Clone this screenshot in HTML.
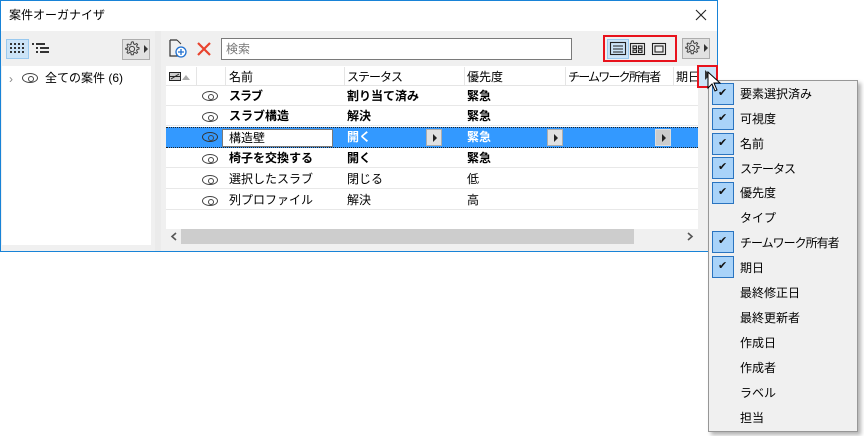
<!DOCTYPE html>
<html><head><meta charset="utf-8"><style>
*{margin:0;padding:0;box-sizing:border-box}
body{width:864px;height:436px;background:#fff;position:relative;overflow:hidden;font-family:"Liberation Sans","Noto Sans CJK JP",sans-serif;font-size:12px;color:#000}
.a{position:absolute}
.t{position:absolute;white-space:nowrap;line-height:14px}
.b{font-weight:bold}
.row{position:absolute;left:166px;width:532px;height:20px;border-bottom:1px solid #e8e8e8}
.eye{position:absolute;width:16px;height:10px;border:1.3px solid #444;border-radius:50%/50%}
.eye:after{content:"";position:absolute;left:4.5px;top:1.5px;width:4px;height:4px;border:1.2px solid #444;border-radius:50%}
.arr{position:absolute;width:16px;height:17px;background:#e1e1e1;border:1px solid #adadad}
.arr:after{content:"";position:absolute;left:6px;top:4px;border-left:4px solid #222;border-top:4px solid transparent;border-bottom:4px solid transparent}
.mi{position:absolute;left:740px;font-size:12px;white-space:nowrap}
.cb{position:absolute;left:712px;width:22px;height:22px;background:#a9d3f9;border:1px solid #2a74c0}
.cb:after{content:"✔";position:absolute;left:5px;top:2px;font-size:11px;color:#111}
.kt{letter-spacing:-1px}
</style></head><body>
<div class="a" style="left:0;top:0;width:718px;height:252px;border:1px solid #1883d7;background:#f0f0f0"></div>
<div class="a" style="left:1px;top:1px;width:716px;height:30px;background:#fff"></div>
<div class="t" style="left:9px;top:8px">案件オーガナイザ</div>
<svg class="a" style="left:695px;top:9px" width="12" height="12"><path d="M1 1l10 10M11 1L1 11" stroke="#222" stroke-width="1.1"/></svg>
<div class="a" style="left:6px;top:39px;width:23px;height:20px;background:#cce4f7;border:1px solid #99c9ef"></div>
<svg class="a" style="left:9px;top:43px" width="50" height="12"><g fill="#333"><rect x="1" y="0" width="2" height="2"/><rect x="5" y="0" width="2" height="2"/><rect x="9" y="0" width="2" height="2"/><rect x="13" y="0" width="2" height="2"/><rect x="5" y="4" width="2" height="2"/><rect x="9" y="4" width="2" height="2"/><rect x="13" y="4" width="2" height="2"/><rect x="1" y="4" width="2" height="2"/><rect x="5" y="8" width="2" height="2"/><rect x="9" y="8" width="2" height="2"/><rect x="13" y="8" width="2" height="2"/><rect x="1" y="8" width="2" height="2"/><rect x="23" y="0" width="2" height="2"/><rect x="27" y="0" width="9" height="2"/><rect x="27" y="4" width="2" height="2"/><rect x="31" y="4" width="9" height="2"/><rect x="27" y="8" width="2" height="2"/><rect x="31" y="8" width="9" height="2"/></g></svg>
<svg width="0" height="0" style="position:absolute"><defs><g id="gear"><path d="M8 0.8l1.3 0.2 0.4 1.9 1.2 0.6 1.7-1 1 0.9-1 1.7 0.5 1.2 1.9 0.4v1.4l-1.9 0.4-0.5 1.2 1 1.7-1 1-1.7-1-1.2 0.5-0.4 1.9H7.3l-0.4-1.9-1.2-0.5-1.7 1-1-1 1-1.7-0.5-1.2-1.9-0.4V7.3l1.9-0.4 0.5-1.2-1-1.7 1-1 1.7 1 1.2-0.5 0.4-1.9z" fill="none" stroke="#444" stroke-width="1"/><circle cx="8" cy="8" r="2.6" fill="none" stroke="#444"/></g></defs></svg>
<div class="a" style="left:122px;top:39px;width:28px;height:21px;background:#e1e1e1;border:1px solid #adadad"></div>
<svg class="a" style="left:124px;top:41px" width="17" height="17"><use href="#gear"/></svg>
<div class="a" style="left:144px;top:45px;border-left:4px solid #333;border-top:4px solid transparent;border-bottom:4px solid transparent"></div>
<div class="a" style="left:2px;top:66px;width:149px;height:179px;background:#fff"></div>
<div class="t" style="left:9px;top:72px;color:#888;font-size:12px">›</div>
<div class="eye" style="left:22px;top:73px"></div>
<div class="t" style="left:45px;top:71px">全ての案件 (6)</div>
<div class="a" style="left:155px;top:31px;width:6px;height:220px;background:#ebebeb"></div>
<svg class="a" style="left:168px;top:39px" width="20" height="20"><path d="M2 1v16h8M2 1h7" fill="none" stroke="#333" stroke-width="1.2"/><path d="M9 1l4 4" stroke="#333"/><circle cx="13" cy="13" r="5" fill="#fff" stroke="#1e6fd0" stroke-width="1.3"/><path d="M13 10v6M10 13h6" stroke="#1e6fd0" stroke-width="1.3"/></svg>
<svg class="a" style="left:196px;top:41px" width="16" height="16"><path d="M2 2l12 12M14 2L2 14" stroke="#e8432e" stroke-width="2.2"/></svg>
<div class="a" style="left:221px;top:38px;width:351px;height:22px;background:#fff;border:1px solid #7a7a7a"></div>
<div class="t" style="left:226px;top:42px;color:#777">検索</div>
<div class="a" style="left:603px;top:35px;width:74px;height:27px;border:2px solid #e8121c"></div>
<div class="a" style="left:607px;top:39px;width:22px;height:20px;background:#cce4f7;border:1px solid #99c9ef"></div>
<svg class="a" style="left:609px;top:41px" width="66" height="16"><g fill="none" stroke="#222" stroke-width="1.1"><rect x="1.5" y="1.5" width="15" height="12"/><path d="M4 5h10M4 8h10M4 11h10"/><rect x="21.5" y="2.5" width="14" height="11"/><rect x="24" y="5" width="3.5" height="2.5"/><rect x="29.5" y="5" width="3.5" height="2.5"/><rect x="24" y="9" width="3.5" height="2.5"/><rect x="29.5" y="9" width="3.5" height="2.5"/><rect x="43.5" y="2.5" width="13" height="11"/><rect x="46" y="5" width="8" height="6"/></g></svg>
<div class="a" style="left:682px;top:38px;width:28px;height:21px;background:#e1e1e1;border:1px solid #adadad"></div>
<svg class="a" style="left:684px;top:40px" width="17" height="17"><use href="#gear"/></svg>
<div class="a" style="left:704px;top:44px;border-left:4px solid #333;border-top:4px solid transparent;border-bottom:4px solid transparent"></div>
<div class="a" style="left:166px;top:66px;width:532px;height:163px;background:#fff"></div>
<div class="a" style="left:166px;top:67px;width:532px;height:19px;border-bottom:1px solid #e5e5e5"></div>
<svg class="a" style="left:169px;top:72px" width="26" height="10"><rect x="0.5" y="0.5" width="11" height="8" fill="#ccc" stroke="#222"/><path d="M2 7l8-5M0.5 4.5h11" stroke="#222"/><path d="M13 8l4-5 4 5z" fill="#aaa"/></svg>
<div class="a" style="left:196px;top:67px;width:1px;height:19px;background:#e5e5e5"></div>
<div class="a" style="left:225px;top:67px;width:1px;height:19px;background:#e5e5e5"></div>
<div class="a" style="left:344px;top:67px;width:1px;height:19px;background:#e5e5e5"></div>
<div class="a" style="left:464px;top:67px;width:1px;height:19px;background:#e5e5e5"></div>
<div class="a" style="left:565px;top:67px;width:1px;height:19px;background:#e5e5e5"></div>
<div class="a" style="left:673px;top:67px;width:1px;height:19px;background:#e5e5e5"></div>
<div class="t" style="left:229px;top:70px">名前</div>
<div class="t kt" style="left:347px;top:70px">ステータス</div>
<div class="t" style="left:467px;top:70px">優先度</div>
<div class="t" style="left:568px;top:70px;letter-spacing:-1.8px">チームワーク所有者</div>
<div class="t" style="left:676px;top:70px">期日</div>
<div class="a" style="left:697px;top:65px;width:21px;height:23px;border:2px solid #e8121c;background:#cce4f7"></div>
<div class="a" style="left:705px;top:70px;border-left:5px solid #333;border-top:5px solid transparent;border-bottom:5px solid transparent"></div>
<div class="row" style="top:86px"></div>
<div class="eye" style="left:202px;top:91px"></div>
<div class="t b kt" style="left:229px;top:89px">スラブ</div><div class="t b" style="left:347px;top:89px">割り当て済み</div><div class="t b" style="left:467px;top:89px">緊急</div>
<div class="row" style="top:106px"></div>
<div class="eye" style="left:202px;top:112px"></div>
<div class="t b" style="left:229px;top:109px">スラブ構造</div><div class="t b" style="left:347px;top:109px">解決</div><div class="t b" style="left:467px;top:109px">緊急</div>
<div class="a" style="left:166px;top:127px;width:532px;height:21px;background:#3399ff;border-top:1px dotted #222;border-bottom:1px dotted #222"></div>
<div class="eye" style="left:202px;top:132px;border-color:#333"></div>
<div class="a" style="left:222px;top:129px;width:111px;height:18px;background:#fff;border:1px solid #7a7a7a"></div>
<div class="t" style="left:229px;top:131px">構造壁</div>
<div class="t b" style="left:347px;top:130px;color:#fff">開く</div>
<div class="arr" style="left:426px;top:129px"></div>
<div class="t b" style="left:467px;top:130px;color:#fff">緊急</div>
<div class="arr" style="left:547px;top:129px"></div>
<div class="arr" style="left:655px;top:129px;background:#ccc;border-color:#ddd"></div>
<div class="row" style="top:148px"></div>
<div class="eye" style="left:202px;top:154px"></div>
<div class="t b" style="left:229px;top:151px">椅子を交換する</div><div class="t b" style="left:347px;top:151px">開く</div><div class="t b" style="left:467px;top:151px">緊急</div>
<div class="row" style="top:169px"></div>
<div class="eye" style="left:202px;top:175px"></div>
<div class="t" style="left:229px;top:172px">選択したスラブ</div><div class="t" style="left:347px;top:172px">閉じる</div><div class="t" style="left:467px;top:172px">低</div>
<div class="row" style="top:190px"></div>
<div class="eye" style="left:202px;top:196px"></div>
<div class="t" style="left:229px;top:193px">列プロファイル</div><div class="t" style="left:347px;top:193px">解決</div><div class="t" style="left:467px;top:193px">高</div>
<div class="a" style="left:166px;top:229px;width:532px;height:15px;background:#f0f0f0"></div>
<div class="a" style="left:181px;top:229px;width:453px;height:15px;background:#cdcdcd"></div>
<svg class="a" style="left:170px;top:232px" width="8" height="9"><path d="M6 1L2 4.5 6 8" fill="none" stroke="#555" stroke-width="1.6"/></svg>
<svg class="a" style="left:686px;top:232px" width="8" height="9"><path d="M2 1l4 3.5L2 8" fill="none" stroke="#555" stroke-width="1.6"/></svg>
<div class="a" style="left:708px;top:80px;width:150px;height:352px;background:#f0f0f0;border:1px solid #979797;box-shadow:3px 3px 4px rgba(0,0,0,.3)"></div>
<div class="cb" style="top:83px"></div><div class="t mi" style="top:87px">要素選択済み</div>
<div class="cb" style="top:108px"></div><div class="t mi" style="top:112px">可視度</div>
<div class="cb" style="top:133px"></div><div class="t mi" style="top:137px">名前</div>
<div class="cb" style="top:157px"></div><div class="t mi kt" style="top:162px">ステータス</div>
<div class="cb" style="top:182px"></div><div class="t mi" style="top:186px">優先度</div>
<div class="t mi" style="top:211px">タイプ</div>
<div class="cb" style="top:231px"></div><div class="t mi" style="top:236px;letter-spacing:-1px">チームワーク所有者</div>
<div class="cb" style="top:256px"></div><div class="t mi" style="top:261px">期日</div>
<div class="t mi" style="top:286px">最終修正日</div>
<div class="t mi" style="top:311px">最終更新者</div>
<div class="t mi" style="top:336px">作成日</div>
<div class="t mi" style="top:361px">作成者</div>
<div class="t mi" style="top:386px">ラベル</div>
<div class="t mi" style="top:411px">担当</div>
<svg class="a" style="left:707px;top:71px" width="14" height="22"><path d="M1 1v16l4-4 3 7 2-1-3-7h6z" fill="#fff" stroke="#000"/></svg>
</body></html>
